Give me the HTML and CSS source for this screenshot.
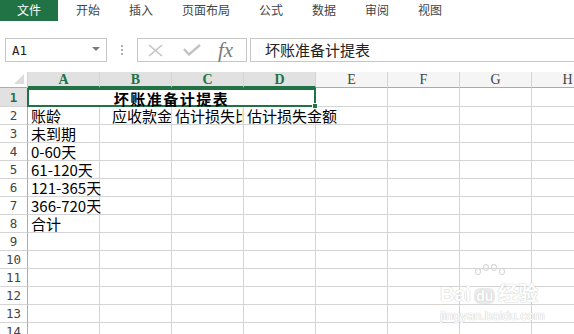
FILE: index.html
```html
<!DOCTYPE html>
<html lang="zh-CN">
<head>
    <meta charset="UTF-8">
    <title>坏账准备计提表 - Excel</title>
    <link rel="stylesheet" href="styles.css">
</head>
<body>
    <div class="window">
        <div class="tabs">
            <div class="tab file-tab">文件</div>
            <div class="tab first">开始</div>
            <div class="tab">插入</div>
            <div class="tab">页面布局</div>
            <div class="tab">公式</div>
            <div class="tab">数据</div>
            <div class="tab">审阅</div>
            <div class="tab">视图</div>
        </div>

        <div class="formula-bar">
            <div class="name-box">
                <span class="name-text">A1</span>
                <span class="drop"></span>
            </div>
            <div class="grip"><i></i><i></i><i></i></div>
            <div class="fx-box">
                <svg class="icon-x" width="17" height="13" viewBox="0 0 17 13">
                    <path d="M2 1 L15 12 M15 1 L2 12" stroke="#c3c3c3" stroke-width="1.6" fill="none"/>
                </svg>
                <svg class="icon-check" width="18" height="12" viewBox="0 0 18 12">
                    <path d="M1 5 L6 10.5 L17 1" stroke="#c3c3c3" stroke-width="2.4" fill="none"/>
                </svg>
                <span class="fx">fx</span>
            </div>
            <div class="formula-input">坏账准备计提表</div>
        </div>

        <div class="sheet">
            <div class="corner"></div>
            <div class="col-head sel">A</div>
            <div class="col-head sel">B</div>
            <div class="col-head sel">C</div>
            <div class="col-head sel">D</div>
            <div class="col-head">E</div>
            <div class="col-head">F</div>
            <div class="col-head">G</div>
            <div class="col-head">H</div>

            <div class="row-head sel">1</div>
            <div class="cell merged">
                <span class="title">坏账准备计提表</span>
                <span class="fill-handle"></span>
            </div>
            <div class="cell"></div>
            <div class="cell"></div>
            <div class="cell"></div>
            <div class="cell"></div>

            <div class="row-head">2</div>
            <div class="cell">账龄</div>
            <div class="cell clip indent">应收款金额</div>
            <div class="cell clip">估计损失比例</div>
            <div class="cell">估计损失金额</div>
            <div class="cell"></div>
            <div class="cell"></div>
            <div class="cell"></div>
            <div class="cell"></div>

            <div class="row-head">3</div>
            <div class="cell">未到期</div>
            <div class="cell"></div><div class="cell"></div><div class="cell"></div>
            <div class="cell"></div><div class="cell"></div><div class="cell"></div><div class="cell"></div>

            <div class="row-head">4</div>
            <div class="cell">0-60天</div>
            <div class="cell"></div><div class="cell"></div><div class="cell"></div>
            <div class="cell"></div><div class="cell"></div><div class="cell"></div><div class="cell"></div>

            <div class="row-head">5</div>
            <div class="cell">61-120天</div>
            <div class="cell"></div><div class="cell"></div><div class="cell"></div>
            <div class="cell"></div><div class="cell"></div><div class="cell"></div><div class="cell"></div>

            <div class="row-head">6</div>
            <div class="cell">121-365天</div>
            <div class="cell"></div><div class="cell"></div><div class="cell"></div>
            <div class="cell"></div><div class="cell"></div><div class="cell"></div><div class="cell"></div>

            <div class="row-head">7</div>
            <div class="cell">366-720天</div>
            <div class="cell"></div><div class="cell"></div><div class="cell"></div>
            <div class="cell"></div><div class="cell"></div><div class="cell"></div><div class="cell"></div>

            <div class="row-head">8</div>
            <div class="cell">合计</div>
            <div class="cell"></div><div class="cell"></div><div class="cell"></div>
            <div class="cell"></div><div class="cell"></div><div class="cell"></div><div class="cell"></div>

            <div class="row-head">9</div>
            <div class="cell"></div><div class="cell"></div><div class="cell"></div><div class="cell"></div>
            <div class="cell"></div><div class="cell"></div><div class="cell"></div><div class="cell"></div>

            <div class="row-head">10</div>
            <div class="cell"></div><div class="cell"></div><div class="cell"></div><div class="cell"></div>
            <div class="cell"></div><div class="cell"></div><div class="cell"></div><div class="cell"></div>

            <div class="row-head">11</div>
            <div class="cell"></div><div class="cell"></div><div class="cell"></div><div class="cell"></div>
            <div class="cell"></div><div class="cell"></div><div class="cell"></div><div class="cell"></div>

            <div class="row-head">12</div>
            <div class="cell"></div><div class="cell"></div><div class="cell"></div><div class="cell"></div>
            <div class="cell"></div><div class="cell"></div><div class="cell"></div><div class="cell"></div>

            <div class="row-head">13</div>
            <div class="cell"></div><div class="cell"></div><div class="cell"></div><div class="cell"></div>
            <div class="cell"></div><div class="cell"></div><div class="cell"></div><div class="cell"></div>

            <div class="row-head">14</div>
            <div class="cell"></div><div class="cell"></div><div class="cell"></div><div class="cell"></div>
            <div class="cell"></div><div class="cell"></div><div class="cell"></div><div class="cell"></div>
        </div>

        <div class="watermark">
            <div class="wm-paw">
                <i></i><i></i><i></i><i></i>
            </div>
            <div class="wm-logo">Bai<span class="wm-du">du</span>经验</div>
            <div class="wm-url">jingyan.baidu.com</div>
        </div>
    </div>
</body>
</html>
```

FILE: styles.css
```css
* {
    margin: 0;
    padding: 0;
    box-sizing: border-box;
}

body {
    background: #fff;
    font-family: "Noto Sans CJK SC", sans-serif;
    color: #000;
}

.window {
    position: relative;
    width: 574px;
    height: 334px;
    overflow: hidden;
    background: #fff;
}

/* ribbon tabs */
.tabs {
    display: flex;
    height: 21px;
    gap: 29px;
    font-size: 12px;
    line-height: 19px;
    color: #444;
}

.file-tab {
    width: 58px;
    background: #217346;
    color: #fff;
    text-align: center;
}

.tab.first {
    margin-left: -11px;
}

/* formula bar */
.formula-bar {
    display: flex;
    align-items: center;
    height: 24px;
    margin-top: 17px;
}

.name-box {
    display: flex;
    align-items: center;
    justify-content: space-between;
    width: 102px;
    height: 24px;
    margin-left: 5px;
    border: 1px solid #c6c6c6;
    padding: 0 6px 0 6px;
}

.name-text {
    font-family: "DejaVu Sans Mono", monospace;
    font-size: 12.5px;
    color: #222;
}

.drop {
    width: 0;
    height: 0;
    border-left: 4px solid transparent;
    border-right: 4px solid transparent;
    border-top: 4px solid #7a7a7a;
    margin-top: -2px;
}

.grip {
    display: flex;
    flex-direction: column;
    gap: 2px;
    width: 30px;
    align-items: center;
}

.grip i {
    display: block;
    width: 2px;
    height: 2px;
    background: #b0b0b0;
}

.fx-box {
    display: flex;
    align-items: center;
    width: 110px;
    height: 24px;
    border: 1px solid #c6c6c6;
    padding-left: 9px;
}

.icon-check {
    margin-left: 19px;
}

.fx {
    margin-left: 17px;
    font-family: "Liberation Serif", serif;
    font-style: italic;
    font-size: 21px;
    color: #7a7a7a;
    line-height: 20px;
}

.formula-input {
    flex: 1;
    height: 24px;
    margin-left: 3px;
    border-top: 1px solid #c6c6c6;
    border-bottom: 1px solid #c6c6c6;
    border-left: 1px solid #c6c6c6;
    padding-left: 14px;
    font-size: 15px;
    line-height: 21px;
    color: #222;
}

/* sheet */
.sheet {
    display: grid;
    grid-template-columns: 28px repeat(8, 72px);
    grid-template-rows: 16px 19px repeat(13, 18px);
    margin-top: 10px;
}

.corner {
    position: relative;
    background: #fff;
    border-right: 1px solid #d4d4d4;
    border-bottom: 1px solid #ababab;
}

.corner::after {
    content: "";
    position: absolute;
    right: 3px;
    bottom: 3px;
    border-left: 10px solid transparent;
    border-bottom: 10px solid #dcdcdc;
}

.col-head {
    background: #f5f5f5;
    border-right: 1px solid #d4d4d4;
    border-bottom: 1px solid #ababab;
    text-align: center;
    font-family: "Liberation Serif", serif;
    font-size: 14px;
    line-height: 16px;
    color: #444;
}

.col-head.sel {
    background: #e1e1e1;
    border-bottom: 2px solid #217346;
    color: #217346;
    font-weight: bold;
}

.row-head {
    background: #fff;
    border-right: 1px solid #ababab;
    border-bottom: 1px solid #d4d4d4;
    text-align: center;
    font-family: "DejaVu Sans Mono", monospace;
    font-size: 12.5px;
    line-height: 18px;
    color: #444;
}

.row-head.sel {
    background: #e1e1e1;
    color: #217346;
    font-weight: bold;
    line-height: 20px;
}

.cell {
    border-right: 1px solid #d4d4d4;
    border-bottom: 1px solid #d4d4d4;
    white-space: nowrap;
    font-size: 15px;
    line-height: 18px;
    padding-left: 3px;
}

.cell.clip {
    overflow: hidden;
}

.cell.indent {
    padding-left: 12px;
}

.cell.merged {
    position: relative;
    grid-column: span 4;
    border: 2px solid #217346;
    margin-left: -1px;
    text-align: center;
    padding-left: 0;
}

.title {
    font-weight: bold;
    letter-spacing: 1.5px;
    line-height: 17px;
}

.fill-handle {
    position: absolute;
    right: -4px;
    bottom: -4px;
    width: 6px;
    height: 6px;
    background: #217346;
    border: 1px solid #fff;
}

/* watermark */
.watermark {
    position: absolute;
    left: 440px;
    top: 268px;
    width: 106px;
    color: #fff;
    text-shadow: 0 0 1px #c8c8c8, 0 0 1px #c8c8c8;
    font-family: "Liberation Sans", sans-serif;
    font-weight: bold;
}

.wm-paw {
    display: flex;
    justify-content: center;
    gap: 2px;
    height: 14px;
    margin-left: -6px;
}

.wm-paw i {
    display: block;
    width: 6px;
    height: 7px;
    border: 1px solid #d6d6d6;
    border-radius: 50%;
}

.wm-paw i:nth-child(2),
.wm-paw i:nth-child(3) {
    margin-top: -4px;
}

.wm-logo {
    font-size: 20px;
    line-height: 24px;
}

.wm-du {
    display: inline-block;
    margin: 0 3px;
    padding: 0 2px;
    border-radius: 6px;
    background: #eaeaea;
    font-size: 14px;
    line-height: 16px;
}

.wm-url {
    margin-top: 2px;
    font-size: 13px;
    font-weight: normal;
}
```
